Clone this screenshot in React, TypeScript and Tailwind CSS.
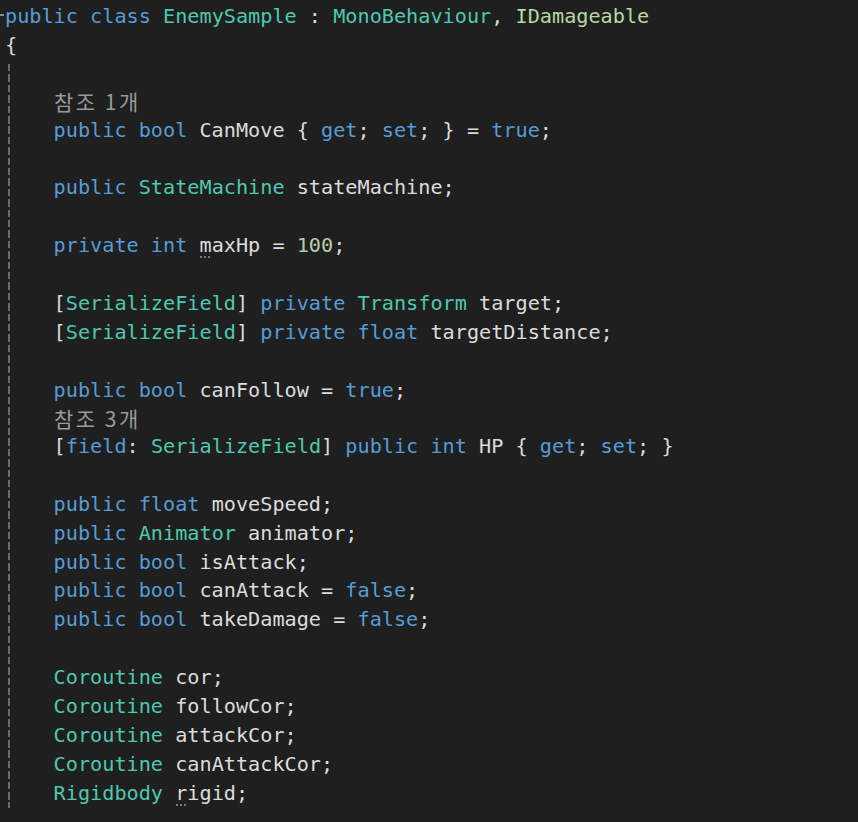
import type { ReactNode } from "react";

type Tok = [string, string];

const KW = "text-[#569cd6]";
const TY = "text-[#4ec9b0]";
const IF = "text-[#b8d7a3]";
const ID = "text-[#dcdcdc]";
const NUM = "text-[#b5cea8]";

type Line =
    | { kind: "code"; toks: Tok[] }
    | { kind: "lens"; text: string }
    | { kind: "blank" };

const code = (...toks: Tok[]): Line => ({ kind: "code", toks });
const lens = (text: string): Line => ({ kind: "lens", text });
const blank: Line = { kind: "blank" };

const body: Line[] = [
    blank,
    lens("참조 1개"),
    code(["    public bool ", KW], ["CanMove { ", ID], ["get", KW], ["; ", ID], ["set", KW], ["; } = ", ID], ["true", KW], [";", ID]),
    blank,
    code(["    public ", KW], ["StateMachine", TY], [" stateMachine;", ID]),
    blank,
    code(["    private int ", KW], ["~m", ID], ["axHp = ", ID], ["100", NUM], [";", ID]),
    blank,
    code(["    [", ID], ["SerializeField", TY], ["] ", ID], ["private ", KW], ["Transform", TY], [" target;", ID]),
    code(["    [", ID], ["SerializeField", TY], ["] ", ID], ["private float", KW], [" targetDistance;", ID]),
    blank,
    code(["    public bool ", KW], ["canFollow = ", ID], ["true", KW], [";", ID]),
    lens("참조 3개"),
    code(["    [", ID], ["field", KW], [": ", ID], ["SerializeField", TY], ["] ", ID], ["public int ", KW], ["HP { ", ID], ["get", KW], ["; ", ID], ["set", KW], ["; }", ID]),
    blank,
    code(["    public float ", KW], ["moveSpeed;", ID]),
    code(["    public ", KW], ["Animator", TY], [" animator;", ID]),
    code(["    public bool ", KW], ["isAttack;", ID]),
    code(["    public bool ", KW], ["canAttack = ", ID], ["false", KW], [";", ID]),
    code(["    public bool ", KW], ["takeDamage = ", ID], ["false", KW], [";", ID]),
    blank,
    code(["    Coroutine", TY], [" cor;", ID]),
    code(["    Coroutine", TY], [" followCor;", ID]),
    code(["    Coroutine", TY], [" attackCor;", ID]),
    code(["    Coroutine", TY], [" canAttackCor;", ID]),
    code(["    Rigidbody", TY], [" ", ID], ["~r", ID], ["igid;", ID]),
];

// three little dots VS draws under a suggestion
function Hinted({ ch, cls }: { ch: string; cls: string }) {
    return (
        <span className={`relative ${cls}`}>
            {ch}
            <span className="absolute left-[1px] top-[23px] flex gap-[2px]">
                <span className="h-[2px] w-[2px] rounded-full bg-[#9a9a9a]" />
                <span className="h-[2px] w-[2px] rounded-full bg-[#9a9a9a]" />
                <span className="h-[2px] w-[2px] rounded-full bg-[#9a9a9a]" />
            </span>
        </span>
    );
}

function CodeLine({ line }: { line: Line }) {
    if (line.kind === "blank") return <div className="h-[28.9px]" />;
    if (line.kind === "lens") {
        return (
            <div
                className="h-[27.4px] pl-[49px] text-[21px] leading-[27px] tracking-[2.5px] text-[#9a9a9a]"
                style={{ fontFamily: '"Noto Sans CJK KR", "Noto Sans", sans-serif' }}
            >
                {line.text}
            </div>
        );
    }
    const parts: ReactNode[] = line.toks.map(([t, c], i) =>
        t.startsWith("~") ? <Hinted key={i} ch={t.slice(1)} cls={c} /> : <span key={i} className={c}>{t}</span>
    );
    return <div className="h-[28.9px] whitespace-pre leading-[28.9px]">{parts}</div>;
}

export default function App() {
    return (
        <div
            className="relative h-[822px] w-[858px] overflow-hidden bg-[#1f1f1f] pl-[5px] pt-[1px] text-[20.2px]"
            style={{ fontFamily: '"DejaVu Sans Mono", "Liberation Mono", monospace' }}
        >
            <span className="absolute left-0 top-[14px] h-[2px] w-[4px] bg-[#8a8a8a]" />
            <div className="h-[29.5px] whitespace-pre leading-[30px]">
                <span className={KW}>public class </span>
                <span className={TY}>EnemySample</span>
                <span className={ID}> : </span>
                <span className={TY}>MonoBehaviour</span>
                <span className={ID}>, </span>
                <span className={IF}>IDamageable</span>
            </div>
            <div className="h-[28.9px] whitespace-pre leading-[28.9px] text-[#dcdcdc]">{"{"}</div>
            <div className="relative">
                <span className="absolute left-[3px] top-[5px] bottom-0 w-[2px] bg-[repeating-linear-gradient(to_bottom,#6a6a6a_0_7.5px,transparent_7.5px_10.4px)]" />
                {body.map((l, i) => (
                    <CodeLine key={i} line={l} />
                ))}
            </div>
        </div>
    );
}
